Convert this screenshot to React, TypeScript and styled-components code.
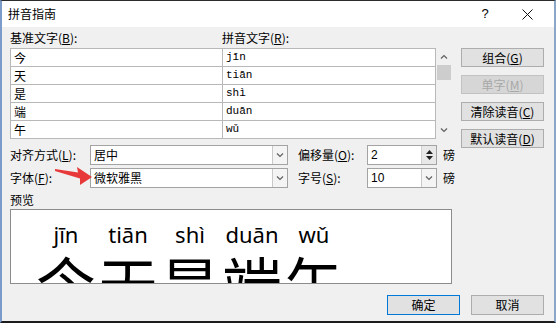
import React from 'react';
import styled, { createGlobalStyle } from 'styled-components';

const Global = createGlobalStyle`
  html, body { margin: 0; padding: 0; background: #fff; }
  body { width: 556px; height: 323px; overflow: hidden; font-family: "Noto Sans CJK SC", "Noto Sans", sans-serif; color: #000; }
  * { box-sizing: border-box; }
`;

const Frame = styled.div`
  position: relative;
  width: 556px;
  height: 323px;
  display: flex;
  flex-direction: column;
  border-top: 1px solid #2b2b2b;
  border-left: 2px solid #7b9ccb;
  border-right: 2px solid #8ca6c8;
  border-bottom: 2px solid #1c1c1c;
  background: #f0f0f0;
`;

const TitleBar = styled.div`
  height: 26px;
  flex: none;
  background: #fff;
  display: flex;
  align-items: center;
  padding-left: 6px;
  font-size: 12px;
  line-height: 14px;
`;

const TitleActions = styled.div`
  margin-left: auto;
  margin-right: 12px;
  display: flex;
  gap: 12px;
`;

const TitleBtn = styled.div`
  width: 30px;
  height: 20px;
  display: flex;
  align-items: center;
  justify-content: center;
  font-family: "Liberation Sans", sans-serif;
  font-size: 13px;
`;

const Content = styled.div`
  flex: 1;
  display: flex;
  flex-direction: column;
  padding: 4px 10px 0 8px;
`;

const Upper = styled.div`
  display: flex;
  gap: 9px;
`;

const MainCol = styled.div`
  width: 442px;
  display: flex;
  flex-direction: column;
`;

const SideCol = styled.div`
  width: 83px;
  padding-top: 17px;
  display: flex;
  flex-direction: column;
  gap: 8px;
`;

const LabelsRow = styled.div`
  display: grid;
  grid-template-columns: 212px 1fr;
  height: 14px;
  margin-bottom: 3px;
`;

const Label = styled.span`
  font-size: 12px;
  line-height: 14px;
  white-space: nowrap;
  display: flex;
  align-items: center;
`;

const TableRow = styled.div`
  display: flex;
`;

const Table = styled.div`
  width: 426px;
  display: grid;
  grid-template-columns: 211px 212px;
  grid-auto-rows: 17px;
  gap: 1px;
  padding: 1px;
  background: #b8b8b8;
`;

const Cell = styled.div<{ $mono?: boolean }>`
  background: #fff;
  padding-left: 3px;
  font-size: ${p => (p.$mono ? '11px' : '12px')};
  line-height: 17px;
  font-family: ${p => (p.$mono ? '"Liberation Mono", monospace' : '"Noto Sans CJK SC", sans-serif')};
`;

const ScrollBar = styled.div`
  width: 16px;
  height: 91px;
  display: flex;
  flex-direction: column;
  align-items: center;
`;

const ScrollArrow = styled.div`
  height: 17px;
  width: 16px;
  display: flex;
  align-items: center;
  justify-content: center;
`;

const Thumb = styled.div`
  width: 14px;
  height: 15px;
  background: #cdcdcd;
`;

const Spacer = styled.div`
  flex: 1;
`;

const Button = styled.div<{ $disabled?: boolean; $default?: boolean; $w?: number; $h?: number }>`
  width: ${p => p.$w ?? 83}px;
  height: ${p => p.$h ?? 19}px;
  display: flex;
  align-items: center;
  justify-content: center;
  font-size: 12px;
  line-height: 14px;
  background: ${p => (p.$disabled ? '#d6d6d6' : '#e1e1e1')};
  border: 1px solid ${p => (p.$default ? '#0078d7' : p.$disabled ? '#c2c2c2' : '#adadad')};
  color: ${p => (p.$disabled ? '#a8a8a8' : '#000')};
  white-space: nowrap;
`;

const Options = styled.div`
  margin-top: 6px;
  display: grid;
  grid-template-columns: 80px 198px 79px 70px 15px;
  grid-template-rows: 20px 20px;
  row-gap: 3px;
`;

const Label2 = styled(Label)`
  padding-left: 10px;
`;

const Unit = styled(Label)`
  padding-left: 6px;
`;

const Field = styled.div`
  position: relative;
  background: #fff;
  border: 1px solid #a3a3a3;
  display: flex;
  align-items: center;
  font-size: 12px;
  line-height: 14px;
  padding-left: 3px;
`;

const FieldText = styled.span<{ $mono?: boolean }>`
  flex: 1;
  font-family: ${p => (p.$mono ? '"Liberation Sans", sans-serif' : '"Noto Sans CJK SC", sans-serif')};
  font-size: 12px;
`;

const DropBtn = styled.div`
  width: 15px;
  height: 100%;
  border-left: 1px solid #c9c9c9;
  background: #f4f4f4;
  display: flex;
  align-items: center;
  justify-content: center;
`;

const SpinBtn = styled.div`
  width: 15px;
  height: 100%;
  background: #e8e8e8;
  border-left: 1px solid #d0d0d0;
  display: flex;
  flex-direction: column;
  align-items: center;
  justify-content: center;
  gap: 2px;
`;

const PreviewLabel = styled(Label)`
  margin-top: 5px;
  margin-bottom: 2px;
`;

const PreviewBox = styled.div`
  height: 75px;
  background: #fff;
  border: 1px solid #8c8c8c;
  overflow: hidden;
  display: flex;
  padding: 9px 0 0 24px;
`;

const RubyCol = styled.div`
  width: 62px;
  display: flex;
  flex-direction: column;
  align-items: center;
`;

const Pinyin = styled.div`
  font-family: "Noto Sans", sans-serif;
  font-size: 22px;
  line-height: 30px;
  white-space: nowrap;
`;

const BigChar = styled.div`
  font-family: "Noto Sans CJK SC", sans-serif;
  font-size: 60px;
  line-height: 60px;
  margin-top: 3px;
`;

const Footer = styled.div`
  margin-top: 11px;
  display: flex;
  justify-content: flex-end;
  gap: 11px;
`;

const ArrowSvg = styled.svg`
  position: absolute;
  left: 48px;
  top: 161px;
  width: 48px;
  height: 28px;
  overflow: visible;
`;

const Chevron = ({ up }: { up?: boolean }) => (
  <svg width="8" height="5" viewBox="0 0 8 5">
    <path d={up ? 'M1 4.5 L4 1.5 L7 4.5' : 'M1 0.5 L4 3.5 L7 0.5'} fill="none" stroke="#606060" strokeWidth="1.2" />
  </svg>
);

const Tri = ({ up }: { up?: boolean }) => (
  <svg width="7" height="4" viewBox="0 0 7 4">
    <path d={up ? 'M0 4 L3.5 0 L7 4 Z' : 'M0 0 L3.5 4 L7 0 Z'} fill="#202020" />
  </svg>
);

const Acc = ({ k }: { k: string }) => (
  <>
    (<u>{k}</u>)
  </>
);

const rows = [
  ['今', 'jīn'],
  ['天', 'tiān'],
  ['是', 'shì'],
  ['端', 'duān'],
  ['午', 'wǔ'],
];

export default function App() {
  return (
    <>
      <Global />
      <Frame>
        <TitleBar>
          拼音指南
          <TitleActions>
            <TitleBtn>?</TitleBtn>
            <TitleBtn>
              <svg width="11" height="11" viewBox="0 0 11 11">
                <path d="M0.5 0.5 L10.5 10.5 M10.5 0.5 L0.5 10.5" stroke="#111" strokeWidth="1" />
              </svg>
            </TitleBtn>
          </TitleActions>
        </TitleBar>
        <Content>
          <Upper>
            <MainCol>
              <LabelsRow>
                <Label>
                  基准文字<Acc k="B" />:
                </Label>
                <Label>
                  拼音文字<Acc k="R" />:
                </Label>
              </LabelsRow>
              <TableRow>
                <Table>
                  {rows.map(([c, p]) => (
                    <React.Fragment key={c}>
                      <Cell>{c}</Cell>
                      <Cell $mono>{p}</Cell>
                    </React.Fragment>
                  ))}
                </Table>
                <ScrollBar>
                  <ScrollArrow>
                    <Chevron up />
                  </ScrollArrow>
                  <Thumb />
                  <Spacer />
                  <ScrollArrow>
                    <Chevron />
                  </ScrollArrow>
                </ScrollBar>
              </TableRow>
              <Options>
                <Label>
                  对齐方式<Acc k="L" />:
                </Label>
                <Field>
                  <FieldText>居中</FieldText>
                  <DropBtn>
                    <Chevron />
                  </DropBtn>
                </Field>
                <Label2>
                  偏移量<Acc k="O" />:
                </Label2>
                <Field>
                  <FieldText $mono>2</FieldText>
                  <SpinBtn>
                    <Tri up />
                    <Tri />
                  </SpinBtn>
                </Field>
                <Unit>磅</Unit>
                <Label>
                  字体<Acc k="F" />:
                </Label>
                <Field>
                  <FieldText>微软雅黑</FieldText>
                  <DropBtn>
                    <Chevron />
                  </DropBtn>
                </Field>
                <Label2>
                  字号<Acc k="S" />:
                </Label2>
                <Field>
                  <FieldText $mono>10</FieldText>
                  <DropBtn>
                    <Chevron />
                  </DropBtn>
                </Field>
                <Unit>磅</Unit>
              </Options>
              <PreviewLabel>预览</PreviewLabel>
              <PreviewBox>
                {rows.map(([c, p]) => (
                  <RubyCol key={c}>
                    <Pinyin>{p}</Pinyin>
                    <BigChar>{c}</BigChar>
                  </RubyCol>
                ))}
              </PreviewBox>
            </MainCol>
            <SideCol>
              <Button>
                组合<Acc k="G" />
              </Button>
              <Button $disabled>
                单字<Acc k="M" />
              </Button>
              <Button>
                清除读音<Acc k="C" />
              </Button>
              <Button>
                默认读音<Acc k="D" />
              </Button>
            </SideCol>
          </Upper>
          <Footer>
            <Button $default $w={73} $h={20}>
              确定
            </Button>
            <Button $w={73} $h={20}>
              取消
            </Button>
          </Footer>
        </Content>
        <ArrowSvg viewBox="0 0 48 28">
          <polygon points="5,7 28,10.5 27,5 42,15 30,23 30,16.5 5,9" fill="#e8393a" />
        </ArrowSvg>
      </Frame>
    </>
  );
}
